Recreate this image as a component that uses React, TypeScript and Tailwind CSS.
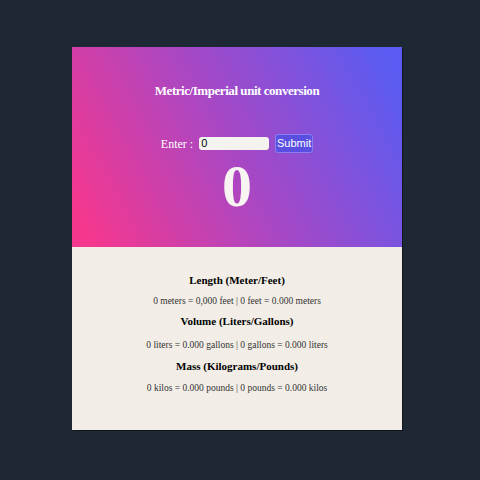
import React, { useState } from "react";

const serif = { fontFamily: '"Liberation Serif", "Times New Roman", serif' };
const sans = { fontFamily: '"Liberation Sans", Arial, sans-serif' };

export default function App() {
  const [value, setValue] = useState("0");
  const n = 0;

  return (
    <div className="w-[480px] h-[480px] bg-[#1e2834] pt-[47px] pl-[72px]" style={serif}>
      <div className="w-[330px] h-[383px] flex flex-col shadow-[1px_1px_0_#11161d]">
        <div className="h-[200px] bg-[linear-gradient(62deg,#f5378e_5%,#a648c6_50%,#5a5cf2_95%)] flex flex-col items-center text-white">
          <h1 className="mt-[36px] text-[13px] font-bold tracking-[-0.45px] leading-[16px]">Metric/Imperial unit conversion</h1>
          <div className="mt-[35px] flex items-center text-[12px]">
            <span className="mr-[6px]">Enter :</span>
            <input
              value={value}
              onChange={(e) => setValue(e.target.value)}
              className="w-[70px] h-[13px] rounded-[3px] bg-[#f5f3f0] text-black text-[11px] px-[2px] outline-none"
              style={sans}
            />
            <button
              className="ml-[6px] w-[38px] h-[19px] rounded-[3px] bg-[#5b4fe2] border border-[#8a7ff0] text-[11px] text-white leading-none"
              style={sans}
            >
              Submit
            </button>
          </div>
          <div className="mt-[4px] text-[60px] font-bold leading-[58px] text-[#f7f4f2]">{n}</div>
        </div>
        <div className="flex-1 bg-[#f2eee7] flex flex-col items-center">
          <h2 className="mt-[26px] text-[11px] font-bold leading-[14px] text-black">Length (Meter/Feet)</h2>
          <p className="mt-[8px] text-[9.5px] leading-[12px] text-[#333]">0 meters = 0,000 feet | 0 feet = 0.000 meters</p>
          <h2 className="mt-[7px] text-[11px] font-bold leading-[14px] text-black">Volume (Liters/Gallons)</h2>
          <p className="mt-[11px] text-[9.5px] leading-[12px] text-[#333]">0 liters = 0.000 gallons | 0 gallons = 0.000 liters</p>
          <h2 className="mt-[8px] text-[11px] font-bold leading-[14px] text-black">Mass (Kilograms/Pounds)</h2>
          <p className="mt-[9px] text-[9.5px] leading-[12px] text-[#333]">0 kilos = 0.000 pounds | 0 pounds = 0.000 kilos</p>
        </div>
      </div>
    </div>
  );
}
